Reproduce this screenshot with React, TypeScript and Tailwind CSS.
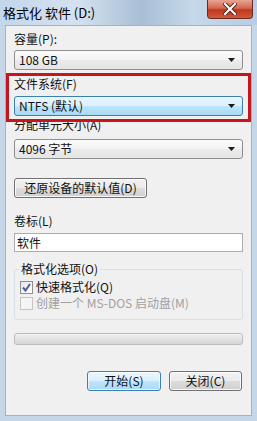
import type { ReactNode } from "react";

const font = { fontFamily: '"Noto Sans CJK SC", "Liberation Sans", sans-serif' };

function Arrow() {
  return (
    <svg width="7" height="4" viewBox="0 0 7 4" className="absolute right-[7px] top-1/2 -translate-y-1/2">
      <path d="M0 0h7L3.5 4z" fill="#1a1a1a" />
    </svg>
  );
}

function Combo({ children, active }: { children: ReactNode; active?: boolean }) {
  return (
    <div
      className={
        "relative h-[20px] rounded-[3px] border pl-[4px] text-[12px] leading-[18px] " +
        (active
          ? "border-[#3c7fb1] bg-[linear-gradient(#eaf6fd,#d9f0fc_50%,#bee6fd_50%,#a7d9f5)]"
          : "border-[#8e8f8f] bg-[linear-gradient(#fbfbfb,#f2f2f2_50%,#ebebeb_50%,#e5e5e5)]")
      }
    >
      {children}
      <Arrow />
    </div>
  );
}

function Button({ children, primary, className }: { children: ReactNode; primary?: boolean; className?: string }) {
  return (
    <div
      className={
        "flex h-[20px] items-center justify-center rounded-[3px] border text-[12px] " +
        (primary
          ? "border-[#3c7fb1] bg-[linear-gradient(#eaf6fd,#d9f0fc_50%,#bee6fd_50%,#a7d9f5)] shadow-[inset_0_0_0_1px_#ffffffaa] "
          : "border-[#707070] bg-[linear-gradient(#f2f2f2,#ebebeb_50%,#dddddd_50%,#cfcfcf)] shadow-[inset_0_0_0_1px_#ffffffcc] ") +
        (className ?? "")
      }
    >
      {children}
    </div>
  );
}

export default function App() {
  return (
    <div style={font} className="relative h-[421px] w-[257px] overflow-hidden bg-[#c5d6e9] text-[#111]">
      {/* title bar */}
      <div className="relative flex h-[25px] items-center bg-[linear-gradient(90deg,#c3d6ea,#d4e2f0_30%,#a9bfd6_55%,#c6d8ea_75%,#b6cde4)] pl-[3px] text-[13px] text-black">
        格式化 软件 (D:)
        <div className="absolute right-[4px] top-0 flex h-[19px] w-[46px] items-center justify-center rounded-b-[4px] border border-t-0 border-[#6b2a23] bg-[linear-gradient(#e8a493,#d5674f_45%,#c0371e_55%,#d05a3a)]">
          <svg width="14" height="12" viewBox="0 0 14 12">
            <path d="M2 1l10 10M12 1L2 11" stroke="#4a1b14" strokeWidth="4" strokeLinecap="square" />
            <path d="M2 1l10 10M12 1L2 11" stroke="#fff" strokeWidth="2.2" strokeLinecap="square" />
          </svg>
        </div>
      </div>

      {/* client area */}
      <div className="mx-[5px] h-[391px] border border-[#9fb3cb] bg-[#f0f0f0] px-[8px]">
        <div className="mt-[6px] h-[14px] text-[12px] leading-[14px]">容量(P):</div>
        <div className="mt-[4px]">
          <Combo>108 GB</Combo>
        </div>

        <div className="relative z-10 -mx-[8px] mt-[3px] h-[49px] border-[3px] border-[#c4161c] px-[5px] pt-[1px]">
          <div className="h-[14px] text-[12px] leading-[14px]">文件系统(F)</div>
          <div className="mt-[5px]">
            <Combo active>NTFS (默认)</Combo>
          </div>
        </div>

        <div className="-mt-[4px] h-[14px] text-[12px] leading-[14px]">分配单元大小(A)</div>
        <div className="mt-[7px]">
          <Combo>4096 字节</Combo>
        </div>

        <div className="mt-[19px] w-[133px]">
          <Button>还原设备的默认值(D)</Button>
        </div>

        <div className="mt-[16px] h-[14px] text-[12px] leading-[14px]">卷标(L)</div>
        <div className="mt-[5px] h-[19px] border border-[#abadb3] bg-white pl-[2px] text-[12px] leading-[17px]">软件</div>

        <div className="relative mt-[17px] h-[51px] rounded-[3px] border border-[#d5dfe5] px-[5px]">
          <div className="absolute -top-[8px] left-[4px] bg-[#f0f0f0] px-[2px] text-[12px] leading-[14px]">格式化选项(O)</div>
          <div className="mt-[9px] flex h-[16px] items-center gap-[3px] text-[12px]">
            <div className="flex h-[13px] w-[13px] items-center justify-center border border-[#8e8f8f] bg-[linear-gradient(135deg,#e6e6e6,#fff)]">
              <svg width="9" height="9" viewBox="0 0 9 9">
                <path d="M1 4.5l2.5 3L8 1" fill="none" stroke="#4a5f97" strokeWidth="2" />
              </svg>
            </div>
            快速格式化(Q)
          </div>
          <div className="flex h-[16px] items-center gap-[3px] text-[12px] text-[#a0a0a0]">
            <div className="h-[13px] w-[13px] border border-[#c6c6c6] bg-[#f4f4f4]" />
            创建一个 MS-DOS 启动盘(M)
          </div>
        </div>

        <div className="mt-[13px] h-[12px] rounded-[3px] border border-[#bcbcbc] bg-[linear-gradient(#f3f3f3,#e2e2e2_50%,#d6d6d6)]" />

        <div className="mt-[26px] flex justify-end gap-[8px] pr-[1px]">
          <Button primary className="w-[74px]">
            开始(S)
          </Button>
          <Button className="w-[73px]">关闭(C)</Button>
        </div>
      </div>
    </div>
  );
}
